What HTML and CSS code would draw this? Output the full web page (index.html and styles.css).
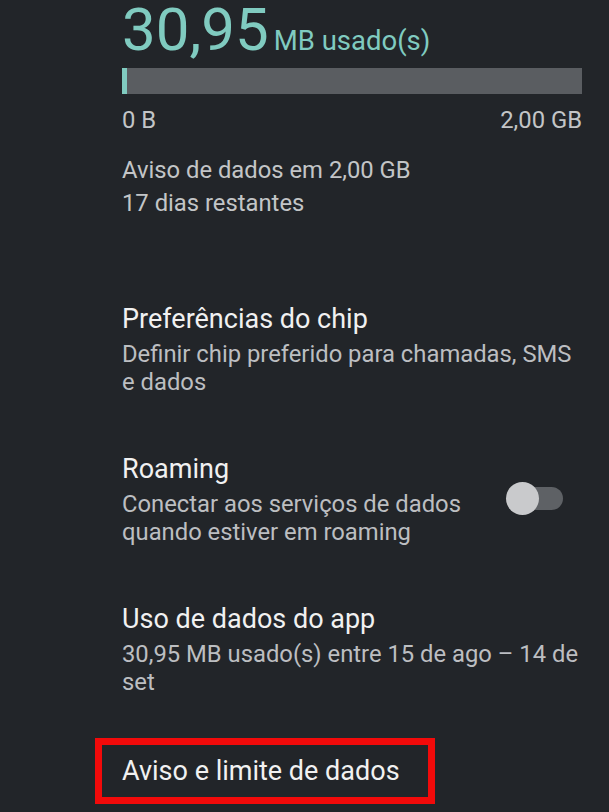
FILE: index.html
```html
<!DOCTYPE html>
<html lang="pt-BR">
<head>
<meta charset="utf-8">
<title>Uso de dados</title>
<link rel="stylesheet" href="styles.css">
</head>
<body>
<main class="screen">
  <section class="usage">
    <div class="usage-amount">
      <span class="usage-value">30,95</span>
      <span class="usage-unit">MB usado(s)</span>
    </div>
    <div class="usage-bar"><div class="usage-fill" style="width: 1%"></div></div>
    <div class="usage-scale">
      <span>0 B</span>
      <span>2,00 GB</span>
    </div>
    <p class="usage-note">Aviso de dados em 2,00 GB<br>17 dias restantes</p>
  </section>

  <ul class="prefs">
    <li class="pref">
      <div class="pref-text">
        <div class="pref-title">Preferências do chip</div>
        <div class="pref-summary">Definir chip preferido para chamadas, SMS e dados</div>
      </div>
    </li>
    <li class="pref">
      <div class="pref-text">
        <div class="pref-title">Roaming</div>
        <div class="pref-summary">Conectar aos serviços de dados quando estiver em roaming</div>
      </div>
      <div class="switch" role="switch" aria-checked="false">
        <span class="switch-track"></span>
        <span class="switch-thumb"></span>
      </div>
    </li>
    <li class="pref">
      <div class="pref-text">
        <div class="pref-title">Uso de dados do app</div>
        <div class="pref-summary">30,95 MB usado(s) entre 15 de ago – 14 de set</div>
      </div>
    </li>
    <li class="pref pref-highlighted">
      <div class="highlight-box">
        <div class="pref-title">Aviso e limite de dados</div>
      </div>
    </li>
  </ul>
</main>
</body>
</html>
```

FILE: styles.css
```css
html, body {
  margin: 0;
  padding: 0;
  background: #222529;
}

body {
  font-family: Roboto, "Noto Sans", "Liberation Sans", sans-serif;
  color: #f1f1f1;
  overflow: hidden;
  height: 812px;
}

.screen {
  padding: 0 27px 0 122px;
}

.usage-amount {
  display: flex;
  align-items: baseline;
  gap: 5px;
  color: #80cbc0;
  height: 60px;
}

.usage-value {
  font-size: 60px;
  line-height: 60px;
}

.usage-unit {
  font-size: 27.5px;
  line-height: 30px;
}

.usage-bar {
  margin-top: 8px;
  height: 26px;
  background: #5a5d61;
}

.usage-fill {
  height: 100%;
  min-width: 4px;
  background: #80cbc0;
}

.usage-scale {
  display: flex;
  justify-content: space-between;
  margin-top: 14px;
  font-size: 23.8px;
  line-height: 24px;
  color: #c3c5c7;
}

.usage-note {
  margin: 22px 0 0;
  font-size: 23.8px;
  line-height: 33px;
  color: #c3c5c7;
}

.prefs {
  list-style: none;
  margin: 54px 0 0;
  padding: 0;
}

.pref {
  display: flex;
  align-items: center;
  padding: 27px 0 28px;
}

.pref-text {
  flex: 1;
  min-width: 0;
}

.pref-title {
  font-size: 27px;
  line-height: 36px;
  color: #f1f1f1;
}

.pref-summary {
  margin-top: 3px;
  font-size: 23.8px;
  line-height: 28px;
  color: #bcbec1;
}

.switch {
  position: relative;
  flex: none;
  width: 57px;
  height: 33px;
  margin: 0 19px 0 20px;
}

.switch-track {
  position: absolute;
  left: 4px;
  right: 0;
  top: 5px;
  height: 23px;
  border-radius: 12px;
  background: #5e6165;
}

.switch-thumb {
  position: absolute;
  left: 0;
  top: 0;
  width: 33px;
  height: 33px;
  border-radius: 50%;
  background: #c9cacc;
}

.pref-highlighted {
  padding-top: 14px;
}

.highlight-box {
  box-sizing: border-box;
  width: 340px;
  margin-left: -27px;
  padding: 8px 0 8px 20px;
  border: 7px solid #f20a0a;
}
```
